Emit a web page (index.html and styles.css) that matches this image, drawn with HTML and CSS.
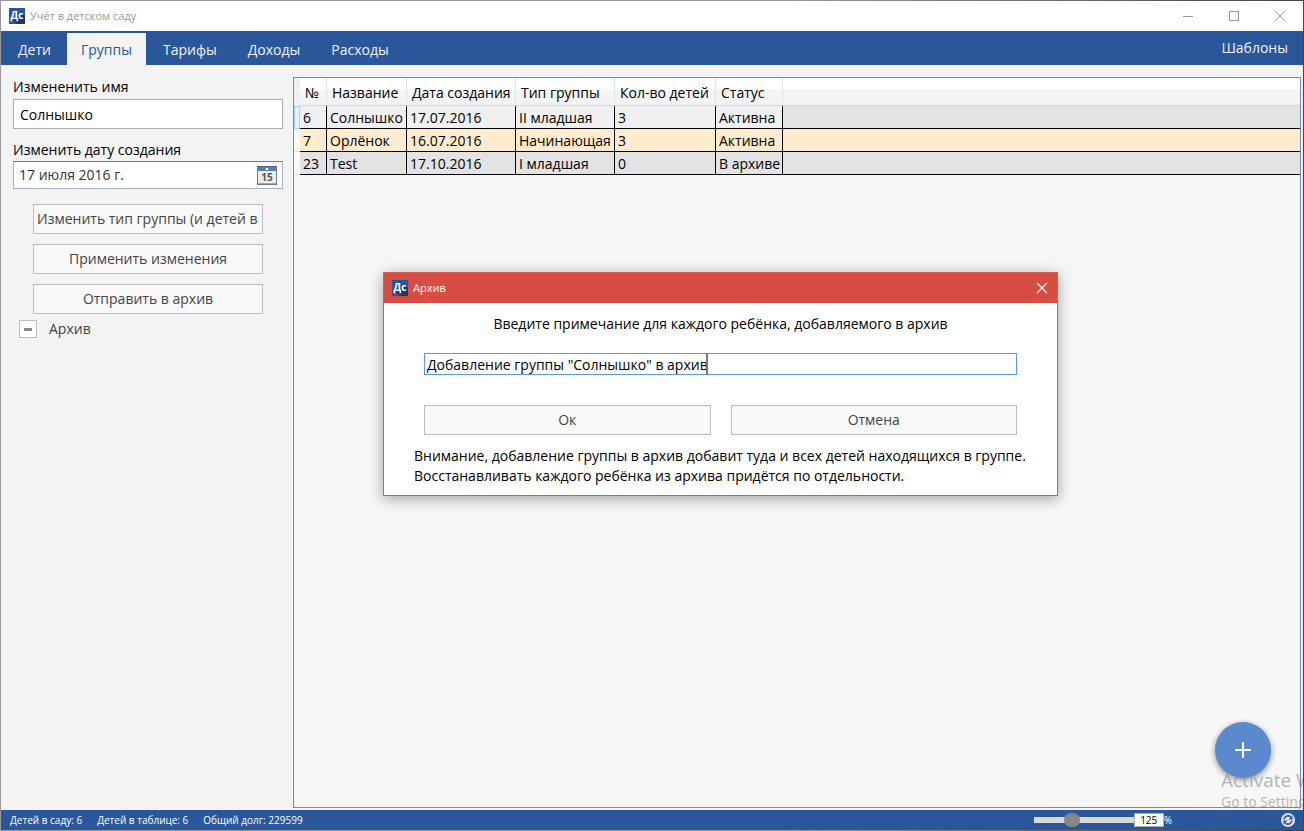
FILE: index.html
```html
<!DOCTYPE html>
<html lang="ru">
<head>
<meta charset="utf-8">
<title>Учёт в детском саду</title>
<link rel="stylesheet" href="styles.css">
</head>
<body>
<div class="window">
  <header class="titlebar">
    <svg class="logo" viewBox="0 0 16 16" aria-hidden="true"><rect width="16" height="16" fill="#2a579a"/><path d="M3 11 14 6l2 2v8H8z" fill="#1b3a69"/><text x="8" y="11" text-anchor="middle" class="logo-text">Дс</text></svg>
    <span class="title">Учёт в детском саду</span>
    <div class="controls">
      <button aria-label="Свернуть"><svg width="12" height="12" viewBox="0 0 12 12"><path d="M1 6.500h10" stroke="#999"/></svg></button>
      <button aria-label="Развернуть"><svg width="12" height="12" viewBox="0 0 12 12"><rect x="1.500" y="1.500" width="9" height="9" fill="none" stroke="#999"/></svg></button>
      <button aria-label="Закрыть"><svg width="12" height="12" viewBox="0 0 12 12"><path d="M1 1l10 10M11 1 1 11" stroke="#999"/></svg></button>
    </div>
  </header>

  <nav class="tabs">
    <a href="#children">Дети</a>
    <a href="#groups" class="active">Группы</a>
    <a href="#tariffs">Тарифы</a>
    <a href="#income">Доходы</a>
    <a href="#expenses">Расходы</a>
    <a href="#templates" class="templates">Шаблоны</a>
  </nav>

  <main class="content">
    <aside class="sidebar">
      <label for="name">Измененить имя</label>
      <input id="name" class="name-input" type="text" value="Солнышко">
      <label for="created">Изменить дату создания</label>
      <div class="date-field">
        <input id="created" type="text" value="17 июля 2016 г.">
        <button aria-label="Выбрать дату">
          <svg width="20" height="19" viewBox="0 0 20 19"><rect x=".5" y=".5" width="19" height="18" fill="#e9ebed" stroke="#75797d"/><rect x="1" y="1" width="18" height="4" fill="#4e83b5"/><path d="M0 .5h20" stroke="#55616d"/><circle cx="10" cy="3" r="1.300" fill="#fff"/><path d="M1 17.500h18" stroke="#a3a7aa"/><text x="10" y="15" text-anchor="middle" class="calendar-day">15</text></svg>
        </button>
      </div>
      <div class="actions">
        <button class="btn long">Изменить тип группы (и детей в</button>
        <button class="btn">Применить изменения</button>
        <button class="btn">Отправить в архив</button>
      </div>
      <div class="archive">
        <button class="toggle" id="toggle" aria-label="Архив"><span></span></button>
        <label for="toggle">Архив</label>
      </div>
    </aside>

    <section class="grid-panel">
      <div class="row-heads"><i></i><i></i><i></i></div>
      <table>
        <colgroup><col class="c-num"><col class="c-name"><col class="c-date"><col class="c-type"><col class="c-count"><col class="c-status"><col></colgroup>
        <thead><tr><th>№</th><th>Название</th><th>Дата создания</th><th>Тип группы</th><th>Кол-во детей</th><th>Статус</th><th></th></tr></thead>
        <tbody>
          <tr class="selected"><td>6</td><td>Солнышко</td><td>17.07.2016</td><td>II младшая</td><td>3</td><td>Активна</td><td></td></tr>
          <tr class="warm"><td>7</td><td>Орлёнок</td><td>16.07.2016</td><td>Начинающая</td><td>3</td><td>Активна</td><td></td></tr>
          <tr><td>23</td><td>Test</td><td>17.10.2016</td><td>I младшая</td><td>0</td><td>В архиве</td><td></td></tr>
        </tbody>
      </table>
      <button class="add" aria-label="Добавить"><svg width="16" height="16" viewBox="0 0 16 16"><path d="M8 0v16M0 8h16" stroke="#fff" stroke-width="2"/></svg></button>
    </section>
  </main>

  <footer class="statusbar">
    <span>Детей в саду: 6</span>
    <span>Детей в таблице: 6</span>
    <span>Общий долг: 229599</span>
    <div class="zoom">
      <input type="range" min="0" max="100" value="36" aria-label="Масштаб">
      <input type="text" id="percent" value="125" aria-label="Масштаб в процентах"><label for="percent">%</label>
    </div>
    <button class="sync" aria-label="Синхронизация"><svg width="14" height="14" viewBox="0 0 14 14"><circle cx="7" cy="7" r="7" fill="#dedede"/><path d="M3 6.300A4.200 4.200 0 0 1 10 4M11 7.700A4.200 4.200 0 0 1 4 10" fill="none" stroke="#2a579a" stroke-width="1.600"/><path d="M11.500 2.500v4h-4zM2.500 11.500v-4h4z" fill="#2a579a"/></svg></button>
  </footer>

  <div class="watermark"><p class="wm-title">Activate W</p><p>Go to Settings</p></div>

  <div class="dialog" role="dialog" aria-labelledby="dialog-title">
    <header>
      <svg class="logo" viewBox="0 0 16 16" aria-hidden="true"><rect width="16" height="16" fill="#2a579a"/><path d="M3 11 14 6l2 2v8H8z" fill="#1b3a69"/><text x="8" y="11" text-anchor="middle" class="logo-text">Дс</text></svg>
      <span id="dialog-title">Архив</span>
      <button aria-label="Закрыть"><svg width="12" height="12" viewBox="0 0 12 12"><path d="M1 1l10 10M11 1 1 11" stroke="#fff" stroke-width="1.200"/></svg></button>
    </header>
    <div class="dialog-body">
      <label for="note">Введите примечание для каждого ребёнка, добавляемого в архив</label>
      <div class="note"><input id="note" type="text" value="Добавление группы &quot;Солнышко&quot; в архив"><span class="caret"></span></div>
      <div class="choices"><button class="btn">Ок</button><button class="btn">Отмена</button></div>
      <p>Внимание, добавление группы в архив добавит туда и всех детей находящихся в группе.<br>Восстанавливать каждого ребёнка из архива придётся по отдельности.</p>
    </div>
  </div>
</div>
</body>
</html>
```
FILE: styles.css
```css
* { box-sizing: border-box; }

body {
  margin: 0;
  padding: 1px;
  height: 100vh;
  overflow: hidden;
  background: linear-gradient(90deg, #999 0, #999 60%, #444 100%);
  font: 14px/20px "Open Sans", "Noto Sans", sans-serif;
  color: #000;
}

button, input { font: inherit; color: inherit; margin: 0; padding: 0; border: 0; background: none; outline: 0; border-radius: 0; }
button { display: flex; align-items: center; justify-content: center; }
p { margin: 0; }

.window {
  position: relative;
  height: 100%;
  overflow: hidden;
  display: flex;
  flex-direction: column;
  background: #f3f3f3;
}

.titlebar {
  display: flex;
  align-items: center;
  flex: none;
  height: 30px;
  padding-left: 8px;
  background: #fff;
  color: #999;
  font-size: 11px;
}
.logo { width: 16px; height: 16px; flex: none; margin-right: 5px; }
.logo-text { font: bold 10px "Open Sans", sans-serif; fill: #fff; }
.controls { display: flex; margin-left: auto; }
.controls button { width: 46px; height: 28px; }

.tabs {
  display: flex;
  align-items: flex-end;
  flex: none;
  height: 34px;
  background: #2a579a;
}
.tabs a {
  height: 32px;
  padding: 0 14px;
  margin-right: 3px;
  line-height: 34px;
  color: #f3f3f3;
  text-decoration: none;
}
.tabs a:first-child { padding: 0 13px 0 17px; }
.tabs .active { background: #f3f3f3; color: #2a579a; }
.tabs .templates { margin: 0 1px 0 auto; line-height: 30px; }

.content { flex: 1; min-height: 0; display: flex; padding: 12px 2px 2px 12px; }

.sidebar { flex: none; width: 270px; margin-right: 10px; display: flex; flex-direction: column; }
.name-input { height: 30px; margin: 2px 0 11px; padding: 0 6px; border: 1px solid #abadb3; background: #fff; }
.date-field {
  display: flex;
  height: 28px;
  margin-top: 1px;
  padding: 1px;
  border: 1px solid #a5b2bd;
  border-top-color: #6b7f90;
  background: #fafafa;
}
.date-field input { flex: 1; min-width: 0; padding: 0 4px; background: #fff; color: #333; }
.date-field button { width: 28px; }
.calendar-day { font: bold 10px "Open Sans", sans-serif; fill: #555; }

.actions { display: flex; flex-direction: column; gap: 10px; padding: 15px 20px 5px; }
.btn { height: 30px; border: 1px solid #bcbcbc; background: #f9f9f9; color: #444; white-space: nowrap; overflow: hidden; }
.btn.long { justify-content: flex-start; padding-left: 3px; }
.archive { display: flex; align-items: center; gap: 12px; padding-left: 6px; color: #444; }
.toggle { width: 18px; height: 18px; border: 1px solid #bcbcbc; background: #fff; }
.toggle span { width: 8px; height: 3px; background: #888; }

.grid-panel {
  position: relative;
  flex: 1;
  min-width: 0;
  display: flex;
  align-items: flex-start;
  border: 1px solid #6b8fb8;
  background: #f7f7f7;
}
.row-heads { flex: none; width: 6px; padding-top: 28px; background: #f0f0f0; }
.row-heads i { display: block; height: 23px; border-bottom: 1px solid #ddd; background: #fafafa; }
.row-heads i:first-child { border: 1px solid #9bd5f5; background: #e3f4fd; }

table { flex: 1; table-layout: fixed; border-collapse: separate; border-spacing: 0; width: 0; }
.c-num { width: 27px; }
.c-name { width: 80px; }
.c-date { width: 109px; }
.c-type { width: 99px; }
.c-count { width: 101px; }
.c-status { width: 67px; }
th {
  height: 28px;
  padding: 2px 0 0 5px;
  border-right: 1px solid #e2e3e5;
  border-bottom: 1px solid #d5d5d5;
  background: linear-gradient(#fff 0, #fff 42%, #f5f6f8 43%, #f1f2f4 100%);
  font-weight: normal;
  text-align: left;
  white-space: nowrap;
}
td { height: 23px; padding: 2px 0 0 3px; border-right: 1px solid #000; border-bottom: 1px solid #000; background: #e3e3e3; white-space: nowrap; }
.selected td { background: #f0f0f0; }
.selected td:last-child { background: #e3e3e3; }
.warm td { background: #ffebcd; }
th:last-child, td:last-child { border-right: 0; }

.add {
  position: absolute;
  right: 29px;
  bottom: 29px;
  width: 56px;
  height: 56px;
  border-radius: 50%;
  background: #5b89cd;
  box-shadow: 0 2px 6px rgba(0, 0, 0, .45);
}

.statusbar {
  display: flex;
  align-items: center;
  flex: none;
  gap: 15px;
  height: 20px;
  padding: 0 8px 0 9px;
  background: #2a579a;
  color: #fff;
  font-size: 10px;
}
.zoom { display: flex; align-items: center; margin-left: auto; }
.zoom input[type="range"] { appearance: none; width: 100px; height: 6px; background: #d8d8d8; }
.zoom input[type="range"]::-webkit-slider-thumb { appearance: none; width: 16px; height: 14px; border-radius: 7px; background: #858585; }
.zoom input[type="text"] { width: 30px; height: 14px; border: 1px solid #abadb3; background: #fff; color: #000; text-align: center; }
.sync { margin-left: 94px; }

.watermark {
  position: absolute;
  right: 0;
  bottom: 21px;
  width: 82px;
  height: 41px;
  overflow: hidden;
  color: rgba(140, 140, 140, .65);
  white-space: nowrap;
}
.wm-title { font-size: 19px; line-height: 24px; }

.dialog {
  position: absolute;
  left: 382px;
  top: 271px;
  width: 675px;
  border: 1px solid #c9605a;
  background: #fff;
  box-shadow: 0 3px 14px rgba(0, 0, 0, .35);
}
.dialog header {
  display: flex;
  align-items: center;
  height: 30px;
  padding: 0 9px 0 8px;
  background: #d84c42;
  color: #fff;
  font-size: 11px;
}
.dialog header button { margin-left: auto; }
.dialog-body { display: flex; flex-direction: column; padding: 11px 30px 9px; }
.dialog-body > label { text-align: center; }
.note { position: relative; display: flex; margin: 19px 10px 30px; }
.note input { flex: 1; height: 22px; padding: 0 2px; border: 1px solid #569de5; }
.caret { position: absolute; left: 282px; top: 0; width: 2px; height: 22px; background: #777; }
.choices { display: grid; grid-template-columns: 1fr 1fr; gap: 20px; margin: 0 10px 11px; }
.dialog-body p { white-space: nowrap; }
```
